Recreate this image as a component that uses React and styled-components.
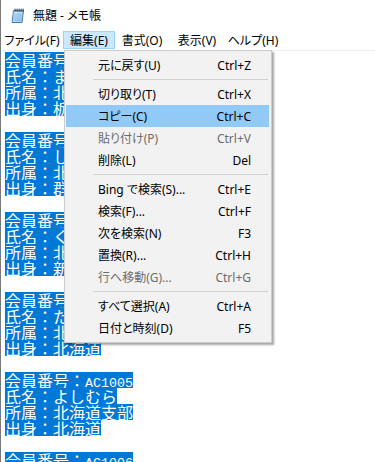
import React from 'react';
import styled, { createGlobalStyle } from 'styled-components';

const GlobalStyle = createGlobalStyle`
  html, body {
    margin: 0;
    padding: 0;
    background: #fff;
    overflow: hidden;
  }
`;

const uiFont = `"Noto Sans", "Noto Sans CJK JP", sans-serif`;

const Window = styled.div`
  position: relative;
  width: 375px;
  height: 462px;
  box-sizing: border-box;
  border-left: 1px solid #7a7a7a;
  background: #fff;
  overflow: hidden;
  display: flex;
  flex-direction: column;
  font-family: ${uiFont};
  font-feature-settings: "palt";
`;

const TitleBar = styled.div`
  height: 30px;
  flex-shrink: 0;
  display: flex;
  align-items: center;
  gap: 7px;
  padding-left: 9px;
  font-size: 12px;
  color: #000;
`;

const MenuBar = styled.div`
  height: 20px;
  flex-shrink: 0;
  display: flex;
  align-items: center;
  border-bottom: 1px solid #f0f0f0;
`;

const MenuButton = styled.div`
  width: ${p => p.$w}px;
  height: 18px;
  box-sizing: border-box;
  display: flex;
  align-items: center;
  justify-content: center;
  font-size: 12px;
  color: #000;
  border: 1px solid ${p => (p.$active ? '#99d1ff' : 'transparent')};
  background: ${p => (p.$active ? '#cce8ff' : 'transparent')};
`;

const TextArea = styled.div`
  flex: 1;
  padding: 1px 0 0 4px;
  font-family: "Noto Sans CJK JP", sans-serif;
  font-feature-settings: normal;
  font-size: 16px;
  line-height: 16px;
  color: #fff;
`;

const Line = styled.div`
  height: 16px;
  white-space: nowrap;
`;

const Selected = styled.span`
  display: inline-block;
  height: 16px;
  line-height: 16px;
  background: #0078d7;
  color: #fff;
`;

const Latin = styled.span`
  font-family: "Liberation Mono", monospace;
  font-size: 13.33px;
`;

const Dropdown = styled.div`
  position: absolute;
  left: 63px;
  top: 50px;
  width: 208px;
  box-sizing: border-box;
  padding: 3px 0;
  background: #f2f2f2;
  border: 1px solid #cccccc;
  box-shadow: 2px 2px 2px rgba(0, 0, 0, 0.35);
  font-size: 12px;
`;

const DropItem = styled.div`
  height: 22px;
  margin: 0 2px 0 1px;
  padding: 0 18px 0 32px;
  display: flex;
  align-items: center;
  justify-content: space-between;
  color: ${p => (p.$disabled ? '#6d6d6d' : '#000')};
  background: ${p => (p.$hover ? '#91c9f7' : 'transparent')};
`;

const Separator = styled.div`
  height: 1px;
  margin: 3px 3px 3px 28px;
  background: #d2d2d2;
`;

const NotepadIcon = () => (
  <svg width="16" height="17" viewBox="0 0 16 17">
    <defs>
      <linearGradient id="pad" x1="0" y1="0" x2="1" y2="1">
        <stop offset="0" stopColor="#e6f4fd" />
        <stop offset="1" stopColor="#8fc5ea" />
      </linearGradient>
    </defs>
    <path d="M3.5 3.5 L13.5 3.5 L12 15.5 L2 15.5 Z" fill="url(#pad)" stroke="#3f7fb3" strokeWidth="1" />
    <path d="M4 7 L11.8 7 M3.8 9 L11.6 9 M3.5 11 L11.3 11 M3.3 13 L11 13" stroke="#7aaed6" strokeWidth="0.8" />
    {[5, 7, 9, 11, 13].map(x => (
      <rect key={x} x={x - 0.5} y="1.5" width="1.2" height="3.5" rx="0.6" fill="#3a4f66" />
    ))}
  </svg>
);

const records = [
  ['AC1001', 'まつもと', '北海道支部', '栃木県'],
  ['AC1002', 'しみず', '北海道支部', '群馬県'],
  ['AC1003', 'くどう', '北海道支部', '新潟県'],
  ['AC1004', 'たなか', '北海道支部', '北海道'],
  ['AC1005', 'よしむら', '北海道支部', '北海道'],
  ['AC1006', 'さとう', '北海道支部', '青森県'],
];

const menus = [
  { label: 'ファイル(F)', w: 62 },
  { label: '編集(E)', w: 52, active: true },
  { label: '書式(O)', w: 54 },
  { label: '表示(V)', w: 56 },
  { label: 'ヘルプ(H)', w: 56 },
];

const editItems = [
  { label: '元に戻す(U)', key: 'Ctrl+Z' },
  'sep',
  { label: '切り取り(T)', key: 'Ctrl+X' },
  { label: 'コピー(C)', key: 'Ctrl+C', hover: true },
  { label: '貼り付け(P)', key: 'Ctrl+V', disabled: true },
  { label: '削除(L)', key: 'Del' },
  'sep',
  { label: 'Bing で検索(S)...', key: 'Ctrl+E' },
  { label: '検索(F)...', key: 'Ctrl+F' },
  { label: '次を検索(N)', key: 'F3' },
  { label: '置換(R)...', key: 'Ctrl+H' },
  { label: '行へ移動(G)...', key: 'Ctrl+G', disabled: true },
  'sep',
  { label: 'すべて選択(A)', key: 'Ctrl+A' },
  { label: '日付と時刻(D)', key: 'F5' },
];

export default function App() {
  return (
    <>
      <GlobalStyle />
      <Window>
        <TitleBar>
          <NotepadIcon />
          <span>無題 - メモ帳</span>
        </TitleBar>
        <MenuBar>
          {menus.map(m => (
            <MenuButton key={m.label} $w={m.w} $active={m.active}>{m.label}</MenuButton>
          ))}
        </MenuBar>
        <TextArea>
          {records.map(([id, name, dept, home]) => (
            <React.Fragment key={id}>
              <Line><Selected>会員番号：<Latin>{id}</Latin></Selected></Line>
              <Line><Selected>氏名：{name}</Selected></Line>
              <Line><Selected>所属：{dept}</Selected></Line>
              <Line><Selected>出身：{home}</Selected></Line>
              <Line />
            </React.Fragment>
          ))}
        </TextArea>
        <Dropdown>
          {editItems.map((it, i) =>
            it === 'sep' ? (
              <Separator key={i} />
            ) : (
              <DropItem key={it.label} $hover={it.hover} $disabled={it.disabled}>
                <span>{it.label}</span>
                <span>{it.key}</span>
              </DropItem>
            )
          )}
        </Dropdown>
      </Window>
    </>
  );
}
